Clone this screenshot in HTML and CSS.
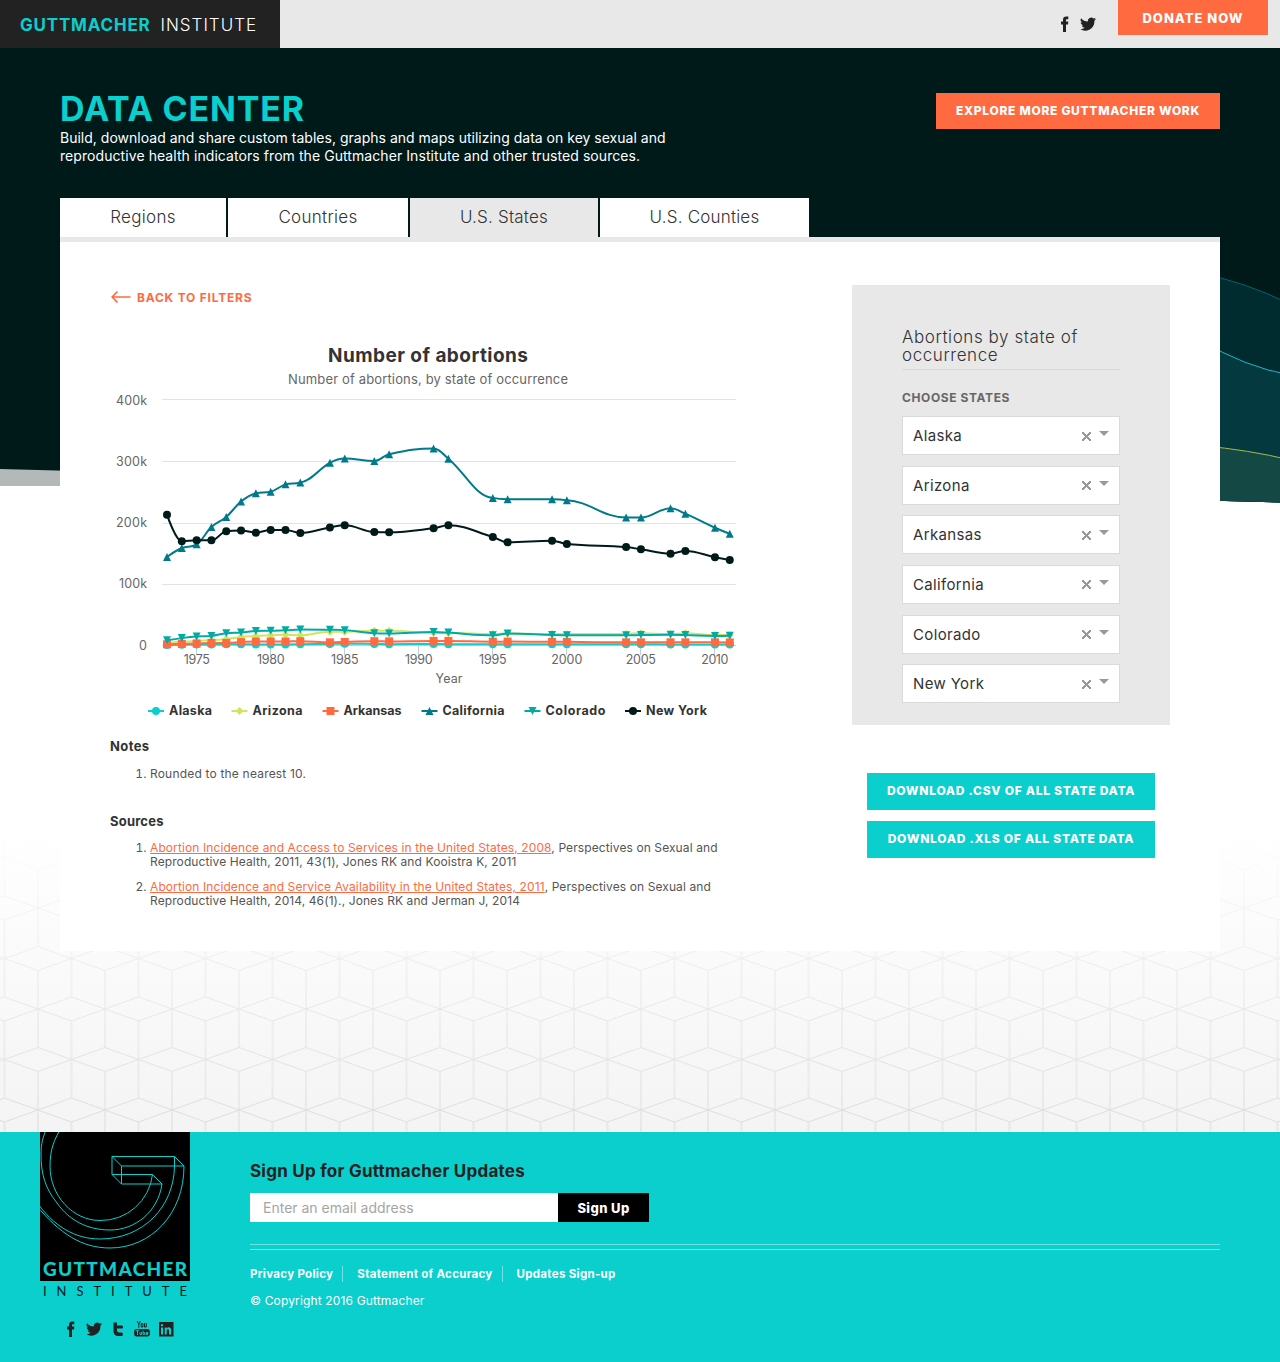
FILE: index.html
```html
<!DOCTYPE html>
<html lang="en">
<head>
<meta charset="utf-8">
<title>Data Center | Guttmacher Institute</title>
<link rel="stylesheet" href="styles.css">
</head>
<body>
<svg class="backdrop" width="1280" height="1132" viewBox="0 0 1280 1132" aria-hidden="true">
  <defs>
    <linearGradient id="fade" x1="0" y1="830" x2="0" y2="1132" gradientUnits="userSpaceOnUse">
      <stop offset="0" stop-color="#fff" stop-opacity="0"/>
      <stop offset="1" stop-color="#fff"/>
    </linearGradient>
    <linearGradient id="haze" x1="0" y1="830" x2="0" y2="1132" gradientUnits="userSpaceOnUse">
      <stop offset="0" stop-color="#fff"/>
      <stop offset="1" stop-color="#f4f4f4"/>
    </linearGradient>
    <mask id="fadeMask" maskUnits="userSpaceOnUse" x="0" y="830" width="1280" height="302">
      <rect y="830" width="1280" height="302" fill="url(#fade)"/>
    </mask>
    <pattern id="cubes" x="4.5" y="997" width="67" height="101" patternUnits="userSpaceOnUse">
      <path d="M0 0L67 24M67 0L0 24M0 24V101M67 24V101M33.5 0V50.5M33.5 74.5V101M0 62.5L33.5 50.5L67 62.5L33.5 74.5Z" fill="none" stroke="#dcdcdc"/>
    </pattern>
    <clipPath id="slope"><path d="M0 48H1280V502.500L0 469Z"/></clipPath>
  </defs>
  <rect y="830" width="1280" height="302" fill="url(#haze)"/>
  <rect y="830" width="1280" height="302" fill="url(#cubes)" mask="url(#fadeMask)"/>
  <rect y="460" width="640" height="26" fill="#b2b9b8"/>
  <g clip-path="url(#slope)">
    <rect y="48" width="1280" height="460" fill="#001a1a"/>
    <path d="M1200 273.500Q1243 281 1290 304V520H1200Z" fill="#002b2f"/>
    <path d="M1200 273.500Q1243 281 1290 304" fill="none" stroke="#006270"/>
    <path d="M1200 340Q1245 367 1290 375V520H1200Z" fill="#03393f"/>
    <path d="M1200 340Q1245 367 1290 375" fill="none" stroke="#1db9c6"/>
    <path d="M1200 445.500Q1250 450 1290 460V520H1200Z" fill="#134844"/>
    <path d="M1200 445.500Q1250 450 1290 460" fill="none" stroke="#a9b94c"/>
  </g>
</svg>

<svg class="sprites" aria-hidden="true">
  <symbol id="facebook" viewBox="0 0 16 16"><path d="M7 16V8.500H5V5.500H7V3.800C7 1.500 8.200.5 10.300.5H12.300V3.300H11C10.300 3.300 10 3.600 10 4.300V5.500H12.300L12 8.500H10V16Z"/></symbol>
  <symbol id="twitter" viewBox="0 0 16 16"><path d="M16 3.100a6.500 6.500 0 0 1-1.900.5A3.300 3.300 0 0 0 15.600 1.800a6.600 6.600 0 0 1-2.100.8 3.300 3.300 0 0 0-5.600 3A9.300 9.300 0 0 1 1.100 2.200a3.300 3.300 0 0 0 1 4.400 3.300 3.300 0 0 1-1.500-.4 3.300 3.300 0 0 0 2.600 3.200 3.300 3.300 0 0 1-1.500.1 3.300 3.300 0 0 0 3.100 2.300A6.600 6.600 0 0 1 0 13.100a9.300 9.300 0 0 0 14.400-8.300A6.700 6.700 0 0 0 16 3.100Z"/></symbol>
  <symbol id="tumblr" viewBox="0 0 16 16"><path d="M3.500 1.500H7V4.500H12Q13 4.500 13 6T12 7.500H7V9.500Q7 11.500 9 11.500H11.500Q13 11.500 13 13.200T11.500 15H8.500Q3.500 15 3.500 10Z"/></symbol>
  <symbol id="youtube" viewBox="0 0 16 16"><path d="M2.600 8H13.400Q15.800 8 15.800 10.200V13.300Q15.800 15.500 13.400 15.500H2.600Q.2 15.500 .2 13.300V10.200Q.2 8 2.600 8Z"/><path class="tube" d="M2 9.700H5M3.500 9.700V14M6 11V13.500H7.500V11M9 9.500V13.500H10.500V11.500H9M14 13.500H12.200V11.500H14V12.500H12.200" fill="none" stroke-width=".9"/><path d="M3.200 0L4.800 3.500V6.700M6.300 0L4.800 3.500M7.200 2.500V6H8.900V2.500ZM10.500 2V6H12.300V2" fill="none" stroke="#222" stroke-width="1"/></symbol>
  <symbol id="linkedin" viewBox="0 0 16 16"><path fill-rule="evenodd" d="M1 1H15.500V15.500H1ZM3 6.500V13.500H5V6.500ZM3 3.200V5.200H5V3.200ZM6.700 6.500V13.500H8.700V9.700C8.700 7.700 11 7.700 11 9.700V13.500H13.200V9.200C13.200 6 9.800 5.500 8.700 7.500V6.500Z"/></symbol>
</svg>

<header class="topbar">
  <a class="brand"><b>GUTTMACHER</b><span>INSTITUTE</span></a>
  <nav class="topbar-tools">
    <svg class="icon"><use href="#facebook"/></svg>
    <svg class="icon"><use href="#twitter"/></svg>
    <a class="donate">DONATE NOW</a>
  </nav>
</header>

<main class="page">
  <section class="intro">
    <div>
      <h1>DATA CENTER</h1>
      <p class="lead"><span class="lead-a">Build, download and share custom tables, graphs and maps utilizing data on key sexual and</span><br><span class="lead-b">reproductive health indicators from the Guttmacher Institute and other trusted sources.</span></p>
    </div>
    <a class="explore">EXPLORE MORE GUTTMACHER WORK</a>
  </section>

  <nav class="tabs">
    <a class="tab regions">Regions</a>
    <a class="tab countries">Countries</a>
    <a class="tab states">U.S. States</a>
    <a class="tab counties">U.S. Counties</a>
  </nav>

  <div class="panel">
    <section class="results">
      <a class="back"><svg width="21" height="14" viewBox="0 0 21 14"><path d="M20.500 7H2.500M7.500 1.500L2.200 7L7.500 12.500" fill="none" stroke="#ff6a41" stroke-width="1.700"/></svg><span>BACK TO FILTERS</span></a>
      <svg class="chart" id="chart" width="640" height="390" viewBox="0 0 640 390"></svg>
      <h2 class="notes-title">Notes</h2>
      <ol class="notes"><li>Rounded to the nearest 10.</li></ol>
      <h2 class="sources-title">Sources</h2>
      <ol class="sources">
        <li><a>Abortion Incidence and Access to Services in the United States, 2008</a>, Perspectives on Sexual and<br>Reproductive Health, 2011, 43(1), Jones RK and Kooistra K, 2011</li>
        <li><a>Abortion Incidence and Service Availability in the United States, 2011</a>, Perspectives on Sexual and<br>Reproductive Health, 2014, 46(1)., Jones RK and Jerman J, 2014</li>
      </ol>
    </section>

    <aside class="sidebar">
      <div class="filters">
        <h3>Abortions by state of<br>occurrence</h3>
        <h4>CHOOSE STATES</h4>
        <div class="select"><span>Alaska</span><i class="clear"></i><i class="caret"></i></div>
        <div class="select"><span>Arizona</span><i class="clear"></i><i class="caret"></i></div>
        <div class="select"><span>Arkansas</span><i class="clear"></i><i class="caret"></i></div>
        <div class="select"><span>California</span><i class="clear"></i><i class="caret"></i></div>
        <div class="select"><span>Colorado</span><i class="clear"></i><i class="caret"></i></div>
        <div class="select"><span>New York</span><i class="clear"></i><i class="caret"></i></div>
      </div>
      <a class="download">DOWNLOAD .CSV OF ALL STATE DATA</a>
      <a class="download">DOWNLOAD .XLS OF ALL STATE DATA</a>
    </aside>
  </div>
</main>

<footer class="footer">
  <div class="footer-brand">
    <svg width="150" height="165" viewBox="0 0 150 165">
      <defs><clipPath id="logoBox"><rect width="150" height="149"/></clipPath></defs>
      <rect width="150" height="149"/>
      <g clip-path="url(#logoBox)" fill="none" stroke="#0acfcd">
        <path d="M72 24.500H134.500L144 34H81.500ZM72 24.500V42.500L81.500 52V34M72 42.500H112.500L122 52H81.500M134.500 24.500V34"/>
        <path d="M112.500 42.500A52 52 0 0 1 60 88.500C33 88.500 10 64 10 34C10 18 14 7 22 -5"/>
        <path d="M122 52C118 80 95 98 70 98C47 98 29 88 17 71C5 56 1 42 1 22C1 12 3 4 7 -4"/>
        <path d="M134.500 34C134 75 103 107 60 107C35 107 13 94 -4 69"/>
        <path d="M144 34C144 82 111 116 70 116C42 116 20 102 -4 73"/>
      </g>
      <text class="logo-name" x="3" y="143.500" textLength="144">GUTTMACHER</text>
      <text class="logo-sub" x="3" y="163.500" textLength="144">INSTITUTE</text>
    </svg>
    <div class="footer-social">
      <svg class="icon"><use href="#facebook"/></svg>
      <svg class="icon"><use href="#twitter"/></svg>
      <svg class="icon"><use href="#tumblr"/></svg>
      <svg class="icon"><use href="#youtube"/></svg>
      <svg class="icon"><use href="#linkedin"/></svg>
    </div>
  </div>
  <div class="footer-main">
    <h2>Sign Up for Guttmacher Updates</h2>
    <form class="signup"><input type="text" placeholder="Enter an email address"><button type="button">Sign Up</button></form>
    <hr>
    <nav class="legal"><a>Privacy Policy</a><a>Statement of Accuracy</a><a>Updates Sign-up</a></nav>
    <p>© Copyright 2016 Guttmacher</p>
  </div>
</footer>
<script src="chart.js"></script>
</body>
</html>
```

FILE: styles.css
```css
* { box-sizing: border-box; }
body { margin: 0; width: 1280px; height: 1362px; position: relative; background: #fff; color: #4a4a4a; font-family: Inter, "Liberation Sans", sans-serif; display: flex; flex-direction: column; }
h1, h2, h3, h4, p, ol { margin: 0; }
.backdrop { position: absolute; left: 0; top: 0; z-index: -1; }
.sprites { position: absolute; width: 0; height: 0; }
.icon { width: 16px; height: 16px; fill: #222; }

.topbar { height: 48px; flex: none; background: #e8e8e8; display: flex; justify-content: space-between; }
.brand { width: 280px; height: 48px; background: #222; color: #fff; display: flex; align-items: center; gap: 10px; padding-left: 20px; padding-top: 1px; font-size: 17px; font-weight: 300; letter-spacing: 1px; }
.brand b { color: #0acfcd; font-weight: 700; letter-spacing: .8px; }
.topbar-tools { display: flex; padding-right: 12px; }
.topbar-tools .icon { margin: 15.500px 8px 0 0; }
.donate { margin-left: 14px; width: 150px; height: 35px; background: #ff6a41; color: #fff; font-size: 13px; font-weight: 800; letter-spacing: 1px; line-height: 37px; text-align: center; }

.page { width: 1160px; margin: 0 auto; flex: none; }
.intro { height: 150px; display: flex; justify-content: space-between; padding-top: 45px; }
h1 { font-size: 34px; line-height: 32px; padding-bottom: 4px; font-weight: 700; color: #0acfcd; letter-spacing: .8px; }
.lead { font-size: 14px; line-height: 18px; color: #fff; white-space: nowrap; }
.lead-a { letter-spacing: .01px; }
.lead-b { letter-spacing: .07px; }
.explore { width: 284px; height: 36px; background: #ff6a41; color: #fff; font-size: 12px; font-weight: 800; letter-spacing: .7px; line-height: 36px; text-align: center; white-space: nowrap; }

.tabs { display: flex; gap: 2px; height: 39px; }
.tab { background: #fff; font-size: 17px; line-height: 38px; text-align: center; font-weight: 300; letter-spacing: .3px; color: #333; }
.regions { width: 166px; }
.countries { width: 180px; }
.states { width: 188px; background: #e8e8e8; letter-spacing: .2px; }
.counties { width: 209px; letter-spacing: .2px; }

.panel { height: 714px; background: #fff; border-top: 5px solid #e8e8e8; display: flex; justify-content: space-between; padding: 43px 50px 0; }
.results { width: 640px; }
.back { display: flex; align-items: center; gap: 6px; height: 24px; color: #ff6a41; font-size: 12px; font-weight: 700; letter-spacing: .78px; }
.chart { display: block; margin-top: 26px; }
.results h2 { font-size: 13px; line-height: 16px; font-weight: 700; color: #333; letter-spacing: .2px; }
.results .notes-title { margin-top: 13px; letter-spacing: .4px; }
.sources-title { margin-top: 32px; }
.results ol { padding-left: 40px; font-size: 12px; line-height: 14px; color: #555; white-space: nowrap; letter-spacing: .1px; }
.results .notes { margin-top: 13px; letter-spacing: .19px; }
.sources { margin-top: 12px; }
.sources li + li { margin-top: 11px; }
.sources a { color: #ff6a41; text-decoration: underline; }

.sidebar { width: 318px; display: flex; flex-direction: column; align-items: center; }
.filters { width: 318px; height: 440px; background: #e8e8e8; padding: 43px 50px 0; margin-bottom: 48px; }
.filters h3 { font-size: 17px; line-height: 18px; font-weight: 300; color: #333; border-bottom: 1px solid #dadada; padding-bottom: 5px; letter-spacing: .58px; }
.filters h4 { margin: 21px 0 11px; font-size: 12px; line-height: 14px; font-weight: 700; color: #666; letter-spacing: .6px; }
.select { height: 39px; margin-bottom: 10.670px; background: #fff; border: 1px solid #dadada; display: flex; align-items: center; padding: 0 10px; font-size: 15px; letter-spacing: .35px; color: #333; }
.select span { flex: 1; }
.clear { width: 9px; height: 9px; margin: 1px 8px 0 0; background: linear-gradient(45deg, transparent 44%, #999 44%, #999 56%, transparent 56%), linear-gradient(-45deg, transparent 44%, #999 44%, #999 56%, transparent 56%); }
.caret { border: 5px solid transparent; border-top-color: #999; border-bottom: 0; margin-bottom: 4px; }
.download { width: 288px; height: 37px; margin-bottom: 11px; background: #0acfcd; color: #fff; font-size: 12px; font-weight: 800; letter-spacing: .73px; line-height: 35px; text-align: center; white-space: nowrap; }

.chart text { fill: #666; font-size: 12.500px; }
.chart .title { font-size: 19px; font-weight: 700; fill: #333; }
.chart .subtitle { font-size: 13px; }
.chart .legend { font-size: 12.500px; font-weight: 700; fill: #333; }

.footer { margin-top: auto; height: 230px; flex: none; background: #0acfcd; padding: 0 60px 0 40px; display: flex; gap: 60px; }
.footer-brand { width: 150px; }
.footer-brand > svg { display: block; }
.logo-name { font: 900 19px Lato, sans-serif; fill: #0acfcd; }
.logo-sub { font: 400 13px Lato, sans-serif; fill: #001a1a; }
.footer-social { display: flex; gap: 8px; padding: 24px 0 0 22px; }
.tube { stroke: #0acfcd; }
.footer-main { flex: 1; padding-top: 29px; }
.footer-main h2 { font-size: 17px; line-height: 20px; font-weight: 700; color: #222; letter-spacing: .24px; }
.signup { display: flex; margin-top: 12px; height: 29px; }
.signup input { width: 308px; border: 0; padding: 0 13px; font: 14px Inter, sans-serif; }
.signup input::placeholder { color: #a5a5a5; }
.signup button { width: 91px; border: 0; padding: 0; background: #000; color: #fff; font: 800 13px Inter, sans-serif; letter-spacing: .4px; }
hr { margin: 22px 0 0; height: 6px; border: solid #6fe3e1; border-width: 1px 0; }
.legal { display: flex; margin-top: 16px; color: #fff; font-size: 11.500px; font-weight: 700; line-height: 16px; letter-spacing: .3px; }
.legal a + a { border-left: 1px solid #6fe3e1; margin-left: 9px; padding-left: 14px; }
.footer-main p { margin-top: 11px; font-size: 12px; line-height: 16px; color: #fff; letter-spacing: .15px; }
```

FILE: chart.js
```js
const years = [1973,1974,1975,1976,1977,1978,1979,1980,1981,1982,1984,1985,1987,1988,1991,1992,1995,1996,1999,2000,2004,2005,2007,2008,2010,2011];
// thousands of abortions per year
const series = [
  { name: 'Alaska', color: '#0acfcd', shape: 'circle', x: 38, w: 43,
    data: [1,1.3,1.6,1.8,2,2.2,1.8,1.8,1.8,2,2.6,3,2.5,2.2,2.3,2.2,2.2,2.1,2,1.9,1.9,1.9,1.8,1.8,1.7,1.7] },
  { name: 'Arizona', color: '#d0e55c', shape: 'diamond', x: 121.5, w: 50,
    data: [4,6,7.5,8.5,10.5,14,15.5,16.5,17.5,16.5,22.5,22.5,24,24,20.5,20.5,18.5,19.5,18.5,18.5,18.8,20,18.5,20,17,17] },
  { name: 'Arkansas', color: '#ff6a41', shape: 'square', x: 212.5, w: 58,
    data: [2,2.5,3.2,4.2,4.2,5.5,6.5,6.5,6.5,7,5.2,5.7,7,6.7,7.5,7.5,6.2,6.4,6,5.9,5.2,5.2,5.2,5.2,5.2,5] },
  { name: 'California', color: '#007a8b', shape: 'triangle', x: 311.5, w: 62,
    data: [144,158.5,164.5,192.6,209,234,247.5,250,262,265,297,304,300,311,320.5,303.8,240,237.7,237.7,236,208,208,223,214.3,191.5,181.7] },
  { name: 'Colorado', color: '#00aba3', shape: 'triangle-down', x: 414.5, w: 60,
    data: [8.5,12,14.5,15.5,20,21,23.5,24,24.7,26,25.5,25,20,19.5,22,21,16.5,19.5,17,16.5,16.5,17,17.5,17,15.5,15.8] },
  { name: 'New York', color: '#001a1a', shape: 'circle', x: 515, w: 61,
    data: [212.7,169.4,171,171,185.7,187,183.5,188,188,183,192,195.4,184.6,184,190.5,195.4,176.4,167.8,170.5,165,160,156.4,149.3,153.7,143.4,139] }
];
const px = year => 57 + (year - 1973) * 14.81;
const py = value => 310.5 - value * 0.615;

function spline(p) {
  let d = `M${p[0][0]} ${p[0][1]}`, prev = p[0];
  for (let i = 1; i < p.length; i++) {
    const [x, y] = p[i], last = p[i - 1], next = p[i + 1];
    let left = [x, y], right = [x, y];
    if (next) {
      left = [(1.5 * x + last[0]) / 2.5, (1.5 * y + last[1]) / 2.5];
      right = [(1.5 * x + next[0]) / 2.5, (1.5 * y + next[1]) / 2.5];
      const fix = (right[1] - left[1]) * (right[0] - x) / (right[0] - left[0]) + y - right[1];
      left[1] += fix; right[1] += fix;
      const hiL = Math.max(last[1], y), loL = Math.min(last[1], y);
      if (left[1] > hiL) { left[1] = hiL; right[1] = 2 * y - hiL; }
      else if (left[1] < loL) { left[1] = loL; right[1] = 2 * y - loL; }
      const hiR = Math.max(next[1], y), loR = Math.min(next[1], y);
      if (right[1] > hiR) { right[1] = hiR; left[1] = 2 * y - hiR; }
      else if (right[1] < loR) { right[1] = loR; left[1] = 2 * y - loR; }
    }
    d += `C${prev} ${left} ${x} ${y}`;
    prev = right;
  }
  return d;
}

function marker(shape, x, y, color) {
  const paths = {
    circle: `M${x - 4} ${y}a4 4 0 1 0 8 0a4 4 0 1 0-8 0`,
    square: `M${x - 4} ${y - 4}h8v8h-8z`,
    diamond: `M${x} ${y - 4}l4 4l-4 4l-4-4z`,
    triangle: `M${x} ${y - 4}l4 8h-8z`,
    'triangle-down': `M${x - 4} ${y - 4}h8l-4 8z`
  };
  return `<path d="${paths[shape]}" fill="${color}"/>`;
}

const label = (s, x, y, w, anchor = 'middle', cls = '') =>
  `<text class="${cls}" x="${x}" y="${y}" textLength="${w}" text-anchor="${anchor}">${s}</text>`;

let out = label('Number of abortions', 318, 27, 200, 'middle', 'title')
  + label('Number of abortions, by state of occurrence', 318, 49, 280, 'middle', 'subtitle');
[['400k', 64.5, 31, 70], ['300k', 126.5, 31, 131], ['200k', 188.5, 31, 192], ['100k', 249.5, 28, 253], ['0', 310.5, 8, 315]].forEach(([s, y, w, base]) => {
  out += `<path d="M52 ${y}H626" stroke="${s === '0' ? '#c0d0e0' : '#e2e2e2'}"/>` + label(s, 37, base, w, 'end');
});
for (let year = 1975; year <= 2010; year += 5) {
  const x = Math.floor(px(year)) + 0.5;
  out += `<path d="M${x} 310V320" stroke="#c0d0e0"/>` + label(year, x + 0.3, 329, year < 1980 ? 26 : year < 2000 ? 27.5 : year === 2000 ? 31 : year === 2005 ? 30 : 27);
}
out += label('Year', 339, 348, 27);
for (const s of series) {
  const pts = s.data.map((v, i) => [px(years[i]), py(v)]);
  out += `<path d="${spline(pts)}" fill="none" stroke="${s.color}" stroke-width="2"/>`;
  out += pts.map(([x, y]) => marker(s.shape, x, y, s.color)).join('');
  out += `<path d="M${s.x} 376H${s.x + 16}" stroke="${s.color}" stroke-width="2"/>` + marker(s.shape, s.x + 8, 376, s.color);
  out += label(s.name, s.x + 21, 380, s.w, 'start', 'legend');
}
document.getElementById('chart').innerHTML = out;
```
